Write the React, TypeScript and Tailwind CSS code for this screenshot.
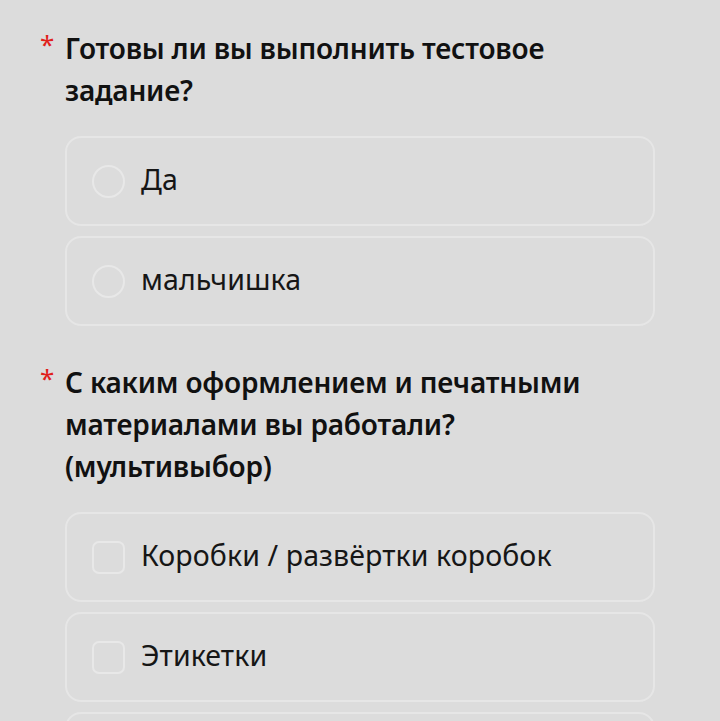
import React from 'react';

type Question = {
  title: string;
  kind: 'radio' | 'checkbox';
  options: string[];
};

const questions: Question[] = [
  {
    title: 'Готовы ли вы выполнить тестовое задание?',
    kind: 'radio',
    options: ['Да', 'мальчишка'],
  },
  {
    title: 'С каким оформлением и печатными материалами вы работали? (мультивыбор)',
    kind: 'checkbox',
    options: ['Коробки / развёртки коробок', 'Этикетки', ''],
  },
];

const Option = ({ label, kind }: { label: string; kind: 'radio' | 'checkbox' }) => (
  <div className="flex h-[90px] shrink-0 items-center rounded-[16px] border-2 border-[#e6e6e6] pl-[25px]">
    <span
      className={`h-[33px] w-[33px] shrink-0 border-2 border-[#e8e8e8] ${
        kind === 'radio' ? 'rounded-full' : 'rounded-[7px]'
      }`}
    />
    {label && (
      <span className="ml-[16px] pb-[4px] text-[28.5px] leading-none tracking-[0.1px] text-[#161616]">{label}</span>
    )}
  </div>
);

export default function App() {
  return (
    <div
      className="h-[721px] w-[720px] overflow-hidden bg-[#dcdcdc] pl-[40px] pr-[65px] pt-[27px]"
      style={{ fontFamily: '"Noto Sans", "Open Sans", sans-serif' }}
    >
      {questions.map((q, i) => (
        <div key={i} className={i > 0 ? 'mt-[35px]' : ''}>
          <div className="flex">
            <span className="w-[25px] shrink-0 pt-[2px] text-[26px] leading-[30px] text-[#e0201b]">*</span>
            <h2 className="text-[28px] font-semibold leading-[42px] tracking-[-0.2px] text-[#111111]">{q.title}</h2>
          </div>
          <div className="ml-[25px] mt-[25px] flex flex-col gap-[10px]">
            {q.options.map((o, j) => (
              <Option key={j} label={o} kind={q.kind} />
            ))}
          </div>
        </div>
      ))}
    </div>
  );
}
